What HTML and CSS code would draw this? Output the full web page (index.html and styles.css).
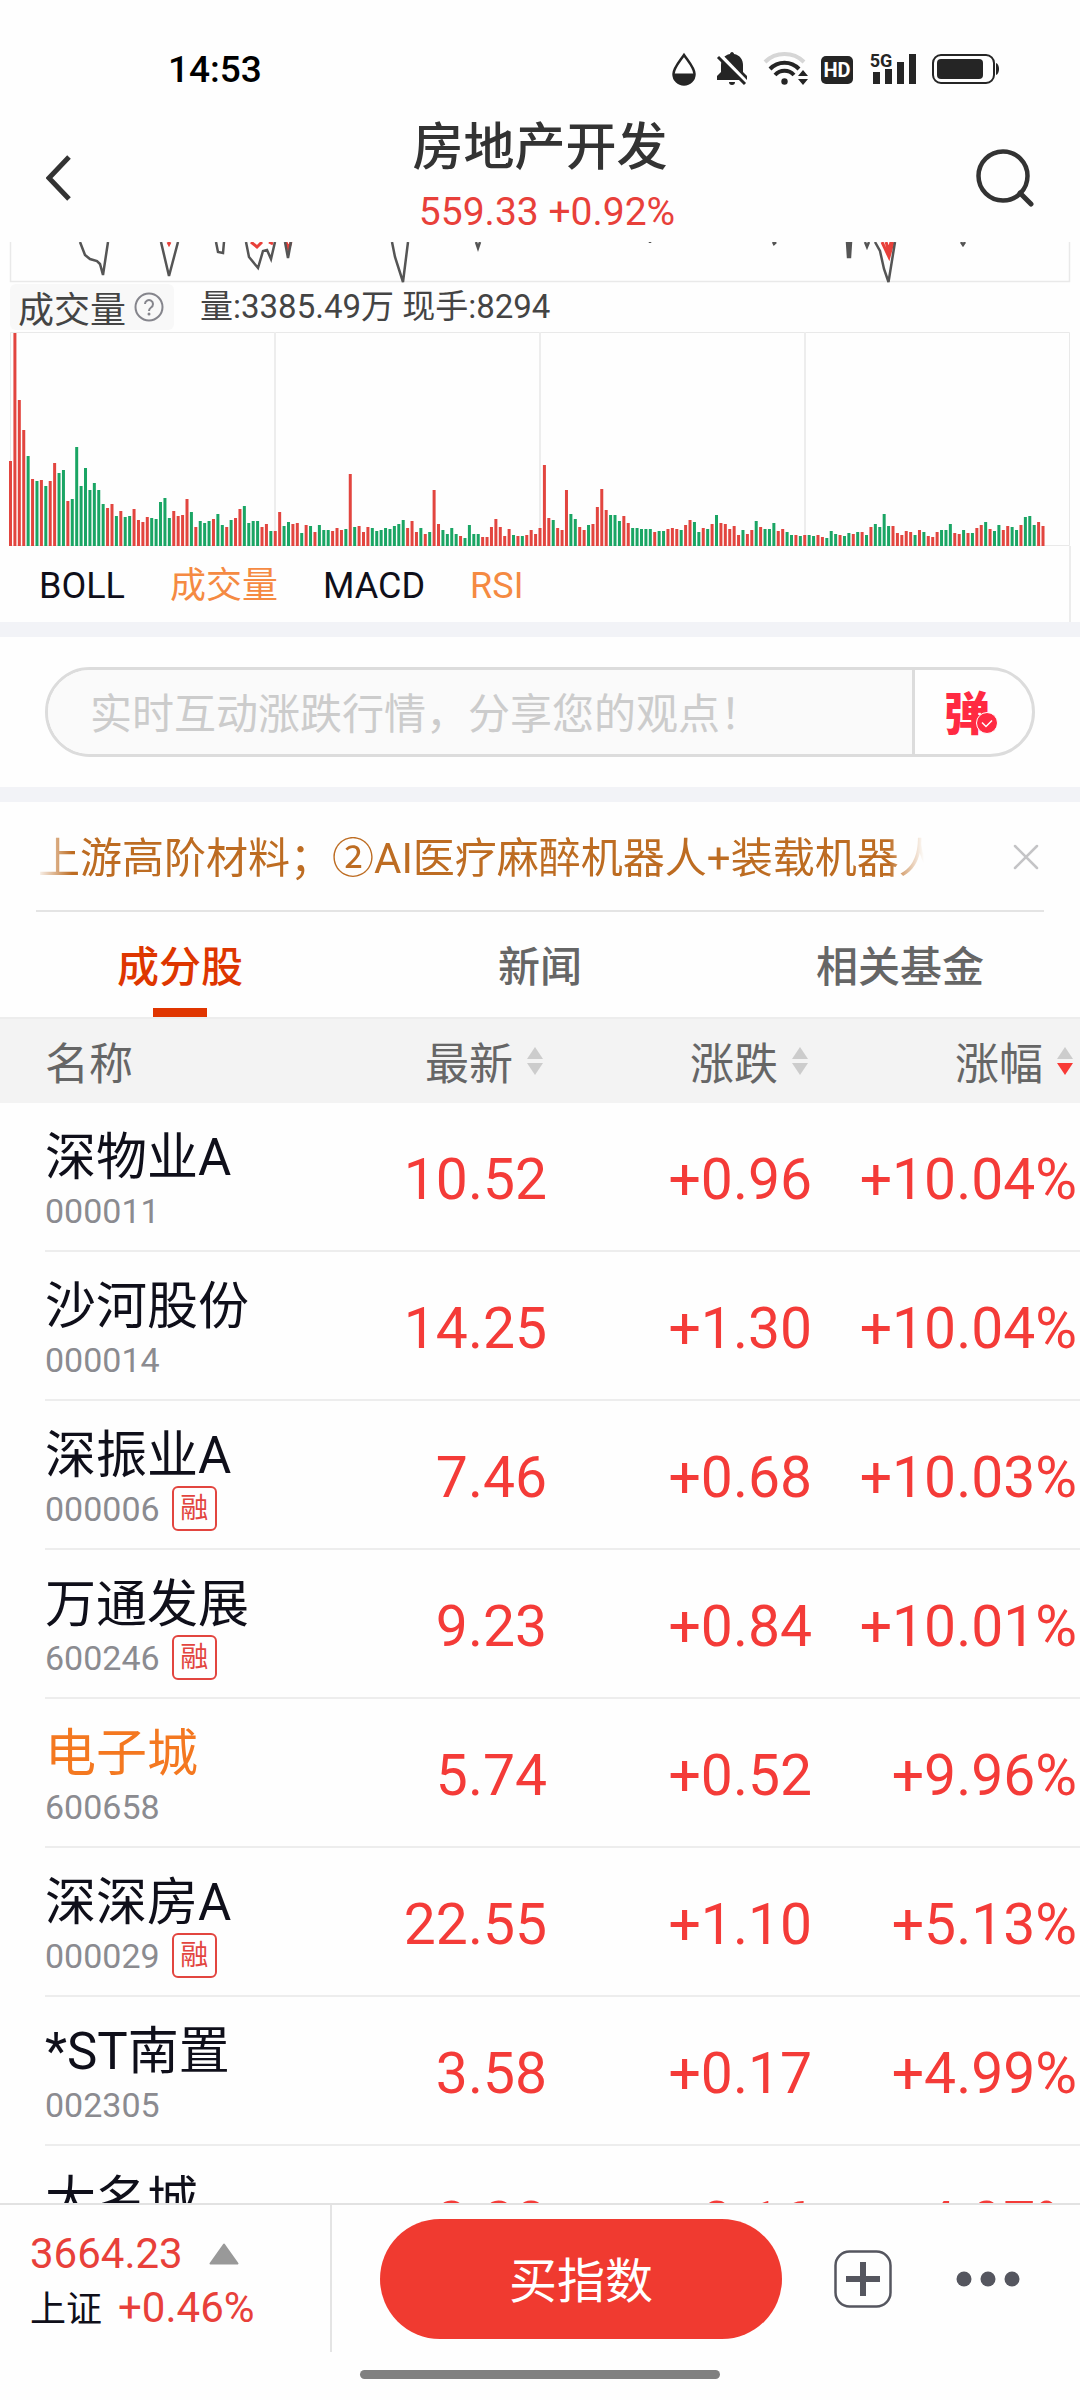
FILE: index.html
```html
<!DOCTYPE html>
<html lang="zh-CN">
<head>
    <meta charset="UTF-8">
    <meta name="viewport" content="width=device-width, initial-scale=1.0">
    <title>房地产开发</title>
    <link rel="stylesheet" href="styles.css">
</head>
<body>
    <div class="page">
        <div class="status-bar">
            <span class="time">14:53</span>
            <svg class="status-icons" width="330" height="40" viewBox="670 50 330 40">
                <!-- 护眼 -->
                <path d="M684 55C680 61 673.500 68 673.500 74a10.500 10.500 0 0 0 21 0C694.500 68 688 61 684 55z" fill="none" stroke="#252525" stroke-width="2.500"/>
                <path d="M673 73.500h22a11 11 0 0 1-22 0z" fill="#252525"/>
                <!-- 静音 -->
                <path d="M732 52c1 0 2 1 2 2 6 1 9 6 9 11v7l4 4v4h-30v-4l4-4v-7c0-5 3-10 9-11 0-1 1-2 2-2zM729 82h6a3 3 0 0 1-6 0z" fill="#252525"/>
                <path d="M720 55l27 28" stroke="#fff" stroke-width="4"/>
                <path d="M718 57l27 27" stroke="#252525" stroke-width="3"/>
                <!-- WiFi -->
                <path d="M765 62a28 28 0 0 1 39 0" fill="none" stroke="#d6d6d6" stroke-width="4"/>
                <path d="M770 69a20 20 0 0 1 29 0" fill="none" stroke="#252525" stroke-width="4"/>
                <path d="M775 75a13 13 0 0 1 19 0" fill="none" stroke="#252525" stroke-width="4"/>
                <circle cx="784.500" cy="81.500" r="3.200" fill="#252525"/>
                <path d="M798 76l5-6 5 6zM798 79l5 6 5-6z" fill="#252525"/>
                <!-- HD -->
                <rect x="821" y="56" width="32" height="28" rx="5" fill="#252525"/>
                <text x="837" y="77" class="icon-text hd">HD</text>
                <!-- 5G 信号 -->
                <text x="881" y="67" class="icon-text">5G</text>
                <path d="M873 72h7v12h-7zM885 69h7v15h-7zM897 62h7v22h-7zM909 54h7v30h-7z" fill="#252525"/>
                <!-- 电池 -->
                <rect x="933" y="55" width="61" height="28" rx="8" fill="none" stroke="#252525" stroke-width="2"/>
                <rect x="937" y="59" width="46" height="20" rx="4" fill="#252525"/>
                <path d="M996 63c4 1 4 11 0 12z" fill="#252525"/>
            </svg>
        </div>

        <header class="header">
            <button class="icon-button" aria-label="返回">
                <svg width="26" height="46" viewBox="0 0 26 46"><path d="M23 2L3 23l20 21" fill="none" stroke="#333" stroke-width="5"/></svg>
            </button>
            <div class="title">
                <h1>房地产开发</h1>
                <p>559.33 +0.92%</p>
            </div>
            <button class="icon-button search" aria-label="搜索">
                <svg width="58" height="58" viewBox="0 0 58 58"><circle cx="27" cy="27" r="24.500" fill="none" stroke="#333" stroke-width="4.500"/><path d="M44 44l11 11" stroke="#333" stroke-width="5" stroke-linecap="round"/></svg>
            </button>
        </header>

        <main class="content">
            <!-- 分时图底部 -->
            <svg class="chart" viewBox="0 0 1080 41">
                <path d="M10.500 0v39.500h1059V0" fill="none" stroke="#e9e9e9" stroke-width="1.500"/>
                <g fill="none" stroke="#e8403a" stroke-width="3">
                    <path d="M168 0l1 2 1-2M251 0l6 5 5-5M269 0l4 2M286 0l2.500 7 2.500-7M882 0l7 15 4-15M886 0l3 9 2-9"/>
                </g>
                <g fill="none" stroke="#555" stroke-width="2.500">
                    <path d="M80 0l5 13 5 4 7 2 3 3 3 11 5-33M161 0l8 34 9-34M216 0l2 10 5 1 1-11M246 0l3 15 9 11 5-17 4-1 4 9 4-17M285 0l3 16 3-16M392 0l3 15 8 25 5-40M476 0l2 6 2-6M650 0v1M773 0l1 2 2-2M847 0l1 15h2l1-15M865 0l2 5 2-5M875 0l5 9 4 18 4.500 13 6.500-40M961 0l2 3 2-3"/>
                    <path d="M849 0v14" stroke-width="4"/>
                </g>
            </svg>

            <div class="volume-info">
                <button class="volume-label">成交量
                    <svg width="30" height="30" viewBox="0 0 30 30"><circle cx="15" cy="15" r="13.500" fill="none" stroke="#85858c" stroke-width="2"/><path d="M11 12a4 4 0 1 1 6 3.500c-1.500 1-2 1.500-2 3.500" fill="none" stroke="#85858c" stroke-width="2"/><circle cx="15" cy="22" r="1.500" fill="#85858c"/></svg>
                </button>
                <span>量:3385.49万 现手:8294</span>
            </div>

            <svg class="chart" id="volumeChart" viewBox="0 0 1080 214"></svg>

            <div class="indicators">
                <button>BOLL</button>
                <button class="on">成交量</button>
                <button>MACD</button>
                <button class="on">RSI</button>
            </div>

            <div class="comment-section">
                <form class="comment">
                    <input type="text" aria-label="发表观点" placeholder="实时互动涨跌行情，分享您的观点！">
                    <button type="button" class="barrage" aria-label="弹幕">弹
                        <svg width="22" height="22" viewBox="0 0 22 22"><circle cx="11" cy="11" r="10.500" fill="#ff2a42" stroke="#fff" stroke-width="1"/><path d="M6 10.500l4 4 6-6" fill="none" stroke="#fff" stroke-width="1.500"/></svg>
                    </button>
                </form>
            </div>

            <div class="notice">
                <p>上游高阶材料；②AI医疗麻醉机器人+装载机器人</p>
                <button class="icon-button" aria-label="关闭">
                    <svg width="26" height="26" viewBox="0 0 26 26"><path d="M2 2l22 22M24 2L2 24" stroke="#c4c4c6" stroke-width="2.500" stroke-linecap="round"/></svg>
                </button>
            </div>

            <nav class="tabs">
                <a href="#stocks" class="active">成分股</a>
                <a href="#news">新闻</a>
                <a href="#funds">相关基金</a>
            </nav>

            <table class="stocks" id="stocks">
                <thead>
                    <tr>
                        <th>名称</th>
                        <th><button>最新 <svg width="16" height="28" viewBox="0 0 16 28"><path class="up" d="M8 0l8 12H0z"/><path class="down" d="M8 28l8-12H0z"/></svg></button></th>
                        <th><button>涨跌 <svg width="16" height="28" viewBox="0 0 16 28"><path class="up" d="M8 0l8 12H0z"/><path class="down" d="M8 28l8-12H0z"/></svg></button></th>
                        <th><button class="sorted">涨幅 <svg width="16" height="28" viewBox="0 0 16 28"><path class="up" d="M8 0l8 12H0z"/><path class="down" d="M8 28l8-12H0z"/></svg></button></th>
                    </tr>
                </thead>
                <tbody>
                    <tr>
                        <td><div class="name">深物业A</div><div class="code">000011</div></td>
                        <td>10.52</td><td>+0.96</td><td>+10.04%</td>
                    </tr>
                    <tr>
                        <td><div class="name">沙河股份</div><div class="code">000014</div></td>
                        <td>14.25</td><td>+1.30</td><td>+10.04%</td>
                    </tr>
                    <tr>
                        <td><div class="name">深振业A</div><div class="code">000006 <span class="tag">融</span></div></td>
                        <td>7.46</td><td>+0.68</td><td>+10.03%</td>
                    </tr>
                    <tr>
                        <td><div class="name">万通发展</div><div class="code">600246 <span class="tag">融</span></div></td>
                        <td>9.23</td><td>+0.84</td><td>+10.01%</td>
                    </tr>
                    <tr>
                        <td><div class="name own">电子城</div><div class="code">600658</div></td>
                        <td>5.74</td><td>+0.52</td><td>+9.96%</td>
                    </tr>
                    <tr>
                        <td><div class="name">深深房A</div><div class="code">000029 <span class="tag">融</span></div></td>
                        <td>22.55</td><td>+1.10</td><td>+5.13%</td>
                    </tr>
                    <tr>
                        <td><div class="name">*ST南置</div><div class="code">002305</div></td>
                        <td>3.58</td><td>+0.17</td><td>+4.99%</td>
                    </tr>
                    <tr>
                        <td><div class="name">大名城</div><div class="code"></div></td>
                        <td>3.38</td><td>+0.16</td><td>+4.97%</td>
                    </tr>
                </tbody>
            </table>
        </main>

        <footer class="footer">
            <div class="toolbar">
                <div class="index-quote">
                    <div class="price">3664.23 <svg width="30" height="22" viewBox="0 0 30 22"><path d="M15 1.500L28.500 20.500h-27z" fill="#999" stroke="#999" stroke-width="2" stroke-linejoin="round"/></svg></div>
                    <div class="change"><span>上证</span> +0.46%</div>
                </div>
                <button class="buy">买指数</button>
                <button class="icon-button" aria-label="添加自选">
                    <svg width="58" height="58" viewBox="0 0 58 58"><rect x="1.500" y="1.500" width="55" height="55" rx="14" fill="none" stroke="#55565f" stroke-width="2.500"/><path d="M12 29h34M29 12v34" stroke="#55565f" stroke-width="6"/></svg>
                </button>
                <button class="icon-button" aria-label="更多">
                    <svg width="64" height="16" viewBox="0 0 64 16"><g fill="#55565f"><circle cx="8" cy="8" r="7.500"/><circle cx="32" cy="8" r="7.500"/><circle cx="56" cy="8" r="7.500"/></g></svg>
                </button>
            </div>
            <div class="home-indicator"></div>
        </footer>
    </div>

    <script>
        // 每分钟成交量，正数为红柱，负数为绿柱
        var volumes = [
            85, 213, 146, 116, -90, 67, -65, 66, -60, 65, 83, -73, -76, 45, -47, -99, -60, -78, -56, -63,
            -56, -42, 38, 42, -30, 35, -29, -30, 37, 26, 24, 29, -28, -27, -44, -48, -28, 35, 30, 31,
            47, -34, 19, -25, -23, -25, 27, -32, -21, 19, -26, 28, 37, -40, -23, -25, -25, 19, 22, -15,
            15, 34, -20, -24, 22, 23, -13, 21, -20, 14, -21, -16, -16, 15, 18, 16, -17, 72, -19, 20,
            14, 19, -18, -15, -16, -18, -17, -20, -22, -26, 18, 25, 14, -18, 12, -14, 56, 22, -16, -12,
            -18, -12, 10, -8, -21, -12, -12, 9, 9, 19, 27, 19, 10, 17, -11, 10, -10, 11, 16, 12,
            18, 81, 28, -26, 18, 16, 56, -32, -27, 19, 16, -21, 22, 39, 57, 36, -31, -31, -25, 30,
            23, -18, -18, -17, -17, -17, 14, -15, -15, 17, 18, 17, -16, 21, 26, -24, -14, 18, -17, 22,
            -31, 23, 22, 17, 20, 11, -16, 12, 16, -25, 19, -17, -17, -23, 15, 17, -14, -11, 11, -10,
            11, -11, -10, 11, 9, -8, -15, -12, 11, -10, -13, 12, -14, 14, -11, 19, -22, -19, -32, -20,
            20, 13, 11, 15, 14, -11, 16, -14, 10, 9, 14, -16, -16, -22, 13, 12, -16, 13, -13, 18,
            21, -24, 17, -15, -21, 16, 20, -19, -16, 21, -29, -30, -21, 24, 20
        ];
        // 全天 240 分钟平分图表宽度
        var left = 10.5, right = 1069.5, bottom = 214;
        var step = (right - left) / 240;

        var svg = '<path class="frame" d="M10.5 213.5V.5h1059v213z"/>';
        svg += '<path class="grid" d="M275 0v213M540 0v213M805 0v213"/>';
        volumes.forEach(function(v, i) {
            var h = Math.abs(v);
            svg += '<rect class="' + (v > 0 ? 'rise' : 'fall') + '" x="' + (left + i * step - 1.5).toFixed(2) +
                '" y="' + (bottom - h) + '" width="3" height="' + h + '"/>';
        });
        document.getElementById('volumeChart').innerHTML = svg;
    </script>
</body>
</html>
```
FILE: styles.css
```css
* {
    box-sizing: border-box;
}
body {
    margin: 0;
    font-family: Roboto, "Noto Sans CJK SC", sans-serif;
    background-color: #fefefe;
    color: #0f0f1a;
}
h1, p {
    margin: 0;
}
button {
    padding: 0;
    border: none;
    background: none;
    font-family: inherit;
    color: inherit;
    cursor: pointer;
}
a {
    text-decoration: none;
}
svg {
    display: block;
}
.page {
    display: flex;
    flex-direction: column;
    height: 100vh;
}
.icon-button {
    display: flex;
    flex: none;
}

/* 状态栏 */
.status-bar {
    display: flex;
    justify-content: space-between;
    align-items: center;
    padding: 48px 80px 0 168px;
}
.time {
    font-size: 37px;
    line-height: 44px;
    font-weight: 500;
    color: #000;
}
.icon-text {
    font-size: 18px;
    font-weight: 700;
    text-anchor: middle;
    fill: #252525;
}
.hd {
    font-size: 20px;
    fill: #fff;
}

/* 标题 */
.header {
    display: grid;
    grid-template-columns: 1fr auto 1fr;
    align-items: center;
    padding: 22px 46px 0;
}
.search {
    justify-self: end;
}
.title {
    text-align: center;
}
.title h1 {
    font-size: 51px;
    line-height: 68px;
    font-weight: 500;
    color: #333;
}
.title p {
    padding-left: 14px;
    font-size: 39px;
    line-height: 60px;
    color: #e8403a;
}

.content {
    flex: 1;
    min-height: 0;
    overflow: hidden;
}

/* 图表 */
.chart {
    width: 100%;
    height: auto;
}
.frame {
    fill: none;
    stroke: #e9e9e9;
}
.grid {
    stroke: #ededed;
    stroke-width: 2;
}
.rise {
    fill: #e2453f;
}
.fall {
    fill: #1aa564;
}
.volume-info {
    display: flex;
    align-items: center;
    gap: 26px;
    padding: 1px 10px 2px;
    font-size: 33px;
    line-height: 46px;
    color: #444;
}
.volume-label {
    display: flex;
    align-items: center;
    gap: 8px;
    height: 46px;
    padding: 0 10px 0 8px;
    border-radius: 6px;
    background-color: #f8f8f8;
    font-size: 36px;
}
.indicators {
    display: flex;
    gap: 45px;
    margin-right: 9px;
    padding: 14px 39px 10px;
    border-right: 2px solid #ececec;
}
.indicators button {
    font-size: 36px;
    line-height: 52px;
}
.indicators .on {
    color: #f58a42;
}

/* 弹幕输入 */
.comment-section {
    padding: 30px 45px;
    border-top: 15px solid #f2f3f7;
    border-bottom: 15px solid #f2f3f7;
}
.comment {
    display: flex;
    height: 90px;
    border: 3px solid #dcdcdc;
    border-radius: 45px;
    overflow: hidden;
}
.comment input {
    flex: 1;
    min-width: 0;
    padding: 4px 42px 0;
    border: none;
    background-color: #fafafa;
    font-family: inherit;
    font-size: 42px;
}
.comment input::placeholder {
    color: #ccc;
}
.barrage {
    display: flex;
    align-items: center;
    position: relative;
    padding: 0 42px 4px 29px;
    border-left: 3px solid #dcdcdc;
    font-size: 46px;
    font-weight: 900;
    color: #ff2a42;
}
.barrage svg {
    position: absolute;
    right: 34px;
    bottom: 20px;
}

/* 公告 */
.notice {
    display: flex;
    justify-content: space-between;
    align-items: center;
    margin: 0 36px;
    padding: 24px 5px 22px 0;
    border-bottom: 2px solid #e4e4e4;
}
.notice p {
    width: 888px;
    padding: 4px 0 0 2px;
    overflow: hidden;
    white-space: nowrap;
    font-size: 42px;
    line-height: 58px;
    color: #bd6c22;
    -webkit-mask-image: linear-gradient(to right, transparent, #000 36px, #000 calc(100% - 36px), transparent);
    mask-image: linear-gradient(to right, transparent, #000 36px, #000 calc(100% - 36px), transparent);
}

/* 标签页 */
.tabs {
    display: flex;
}
.tabs a {
    display: flex;
    flex: 1;
    flex-direction: column;
    align-items: center;
    padding-top: 25px;
    font-size: 42px;
    line-height: 62px;
    font-weight: 500;
    color: #666;
}
.tabs a::after {
    content: "";
    width: 54px;
    height: 9px;
    margin-top: 9px;
}
.tabs .active {
    color: #de3600;
}
.tabs .active::after {
    background-color: #e03500;
}

/* 成分股 */
.stocks {
    width: 100%;
    table-layout: fixed;
    border-collapse: separate;
    border-spacing: 0;
}
.stocks th {
    width: 265px;
    height: 86px;
    padding: 0;
    border-top: 2px solid #ededed;
    background-color: #f3f3f3;
    font-size: 44px;
    font-weight: 400;
    text-align: right;
    color: #666;
}
.stocks th:first-child {
    width: auto;
    padding-left: 45px;
    text-align: left;
}
.stocks th:last-child {
    width: 268px;
    padding-right: 3px;
}
.stocks th button {
    display: flex;
    align-items: center;
    gap: 14px;
    margin-left: auto;
    padding-right: 4px;
    font-size: 44px;
}
.up, .down {
    fill: #ccc;
}
.sorted .down {
    fill: #f83a36;
}
.stocks td {
    height: 149px;
    padding: 6px 0 0;
    border-bottom: 2px solid #ededed;
    font-size: 57px;
    text-align: right;
    white-space: nowrap;
    color: #f43b38;
}
.stocks td:last-child {
    padding-right: 3px;
}
/* 分隔线从文字左侧开始 */
.stocks td:first-child {
    padding: 6px 0 0 45px;
    border-bottom: none;
    background: linear-gradient(#ededed, #ededed) 45px 100% / 100% 2px no-repeat;
    text-align: left;
}
.name {
    font-size: 51px;
    line-height: 60px;
    color: #0f0f1a;
}
.own {
    color: #f47820;
}
.code {
    display: flex;
    align-items: center;
    gap: 12px;
    height: 46px;
    font-size: 34px;
    color: #8b8b90;
}
.tag {
    width: 45px;
    height: 45px;
    border: 2px solid #e2453f;
    border-radius: 6px;
    font-size: 28px;
    line-height: 41px;
    text-align: center;
    color: #e2453f;
}

/* 底部栏 */
.footer {
    border-top: 2px solid #e2e2e2;
    background-color: #fefefe;
}
.toolbar {
    display: flex;
    align-items: center;
    padding-right: 60px;
}
.index-quote {
    width: 332px;
    height: 147px;
    padding: 22px 0 0 30px;
    border-right: 2px solid #e4e4e4;
    font-size: 42px;
    line-height: 54px;
    color: #e8403a;
}
.price {
    display: flex;
    align-items: center;
    gap: 26px;
}
.change {
    display: flex;
    align-items: baseline;
    gap: 16px;
}
.change span {
    font-size: 36px;
    color: #0f0f1a;
}
.buy {
    flex: 1;
    height: 120px;
    margin: 0 52px 0 48px;
    padding-bottom: 4px;
    border-radius: 60px;
    background-color: #f03a30;
    font-size: 48px;
    color: #fff;
}
.toolbar .icon-button:last-child {
    margin-left: 64px;
}
.home-indicator {
    width: 360px;
    height: 9px;
    margin: 18px auto 21px;
    border-radius: 5px;
    background-color: #808080;
}
```
